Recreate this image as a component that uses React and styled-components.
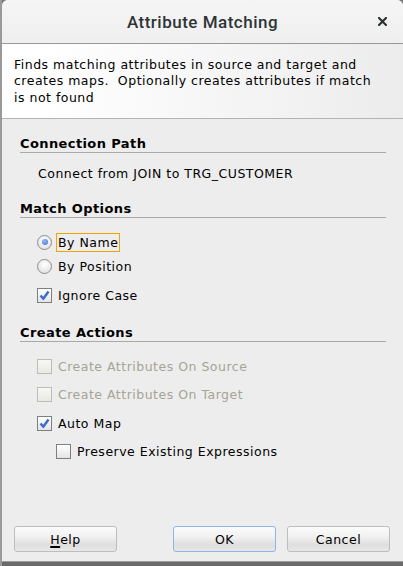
import React from 'react';
import styled, { createGlobalStyle } from 'styled-components';

const GlobalStyle = createGlobalStyle`
  html, body {
    margin: 0;
    padding: 0;
    background: #7b7b7b;
  }
  body {
    font-family: "DejaVu Sans", "Liberation Sans", sans-serif;
    font-size: 12.5px;
    letter-spacing: 0.5px;
    color: #000;
  }
`;

const Screen = styled.div`
  display: flex;
  width: 403px;
  height: 566px;
  overflow: hidden;
  background: linear-gradient(#7b7b7b, #6a6a6a);
`;

const DesktopStrip = styled.div`
  width: 2px;
  flex: none;
  background: #9a9a9a;
`;

const Window = styled.div`
  flex: 1;
  height: 562px;
  display: flex;
  flex-direction: column;
  background: #ededed;
  border-radius: 6px 6px 0 0;
  border-bottom: 1px solid #9b9b9b;
  box-sizing: border-box;
  overflow: hidden;
`;

const TitleBar = styled.div`
  height: 44px;
  flex: none;
  box-sizing: border-box;
  display: flex;
  align-items: center;
  justify-content: center;
  position: relative;
  background: linear-gradient(#f5f5f5, #efefef);
  border-bottom: 1px solid #9a9a9a;
`;

const Title = styled.div`
  font-family: Roboto, "Noto Sans", sans-serif;
  font-weight: 500;
  font-size: 17px;
  letter-spacing: 0.5px;
  color: #2e3436;
  margin-top: 1px;
`;

const CloseButton = styled.div`
  position: absolute;
  right: 16px;
  top: 17px;
  width: 9px;
  height: 9px;
  display: flex;
`;

const Header = styled.div`
  height: 75px;
  flex: none;
  box-sizing: border-box;
  padding: 12.5px 20px 0 12px;
  background: linear-gradient(90deg, #ffffff 10%, #ececec);
  border-bottom: 1px solid #b3b3b3;
  line-height: 16.5px;
  white-space: pre-wrap;
`;

const Body = styled.div`
  flex: 1;
  display: flex;
  flex-direction: column;
  padding: 0 17px 0 18px;
`;

const SectionTitle = styled.div`
  font-weight: bold;
  font-size: 13px;
  letter-spacing: 0.4px;
  line-height: 16px;
  border-bottom: 1px solid #a9a9a9;
  margin-top: ${p => p.$top}px;
`;

const PathText = styled.div`
  line-height: 16px;
  padding-left: 18px;
  margin-top: 13px;
`;

const OptionList = styled.div`
  display: flex;
  flex-direction: column;
  gap: ${p => p.$gap}px;
  margin-top: ${p => p.$top}px;
`;

const Option = styled.div`
  height: 24px;
  display: flex;
  align-items: center;
  padding-left: ${p => (p.$indent ? 36 : 17)}px;
  margin-top: ${p => p.$top || 0}px;
  color: ${p => (p.$disabled ? '#a4a497' : '#000')};
`;

const Box = styled.div`
  width: 15px;
  height: 15px;
  box-sizing: border-box;
  flex: none;
  display: flex;
  align-items: center;
  justify-content: center;
  border: 1px solid ${p => (p.$disabled ? '#bdbdb2' : '#7f7f7f')};
  background: ${p => (p.$disabled ? 'linear-gradient(#f7f7f5, #e9e9e4)' : 'linear-gradient(#ffffff, #e4e4e4)')};
  margin-right: 4px;
`;

const Radio = styled.div`
  width: 15px;
  height: 15px;
  box-sizing: border-box;
  flex: none;
  border-radius: 50%;
  border: 1px solid #8d8d8d;
  background: radial-gradient(circle at 50% 35%, #ffffff, #dcdcdc);
  display: flex;
  align-items: center;
  justify-content: center;
  margin-right: 4px;
`;

const RadioDot = styled.div`
  width: 6px;
  height: 6px;
  border-radius: 50%;
  background: radial-gradient(circle at 40% 35%, #9ab8f0, #3d6fd6);
`;

const Label = styled.span`
  line-height: 17px;
  padding: 0 1px;
  border: 1px solid ${p => (p.$focus ? '#f5a300' : 'transparent')};
`;

const Footer = styled.div`
  display: flex;
  padding: 0 13px 9px 12px;
`;

const Button = styled.div`
  width: 103px;
  height: 26px;
  box-sizing: border-box;
  display: flex;
  align-items: center;
  justify-content: center;
  border-radius: 3px;
  border: 1px solid ${p => (p.$default ? '#8fb5e4' : '#bdbdbd')};
  background: linear-gradient(#fbfbfb, #f1f1f1 40%, #dedede 75%, #e8e8e8);
  margin-right: ${p => p.$right || 0}px;
`;

const Mnemonic = styled.span`
  text-decoration: underline;
  text-decoration-thickness: 2px;
  text-underline-offset: 2px;
`;

const Spacer = styled.div`
  flex: 1;
`;

const CheckMark = () => (
  <svg width="11" height="11" viewBox="0 0 11 11">
    <path d="M1.5 5.5 L4.3 8.8 L9.5 1.5" fill="none" stroke="#3b6ad2" strokeWidth="2.4" strokeLinejoin="round" />
  </svg>
);

const Check = ({ checked, disabled, indent, top, children }) => (
  <Option $disabled={disabled} $indent={indent} $top={top}>
    <Box $disabled={disabled}>{checked && <CheckMark />}</Box>
    <Label>{children}</Label>
  </Option>
);

export default function App() {
  return (
    <>
      <GlobalStyle />
      <Screen>
        <DesktopStrip />
        <Window>
          <TitleBar>
            <Title>Attribute Matching</Title>
            <CloseButton>
              <svg width="9" height="9" viewBox="0 0 9 9">
                <path d="M1 1 L8 8 M8 1 L1 8" stroke="#2e3436" strokeWidth="2.2" strokeLinecap="square" />
              </svg>
            </CloseButton>
          </TitleBar>

          <Header>
            {'Finds matching attributes in source and target and creates maps.  Optionally creates attributes if match is not found'}
          </Header>

          <Body>
            <SectionTitle $top={17}>Connection Path</SectionTitle>
            <PathText>Connect from JOIN to TRG_CUSTOMER</PathText>

            <SectionTitle $top={19}>Match Options</SectionTitle>
            <OptionList $gap={0} $top={12}>
              <Option>
                <Radio><RadioDot /></Radio>
                <Label $focus>By Name</Label>
              </Option>
              <Option>
                <Radio />
                <Label>By Position</Label>
              </Option>
              <Check checked top={5}>Ignore Case</Check>
            </OptionList>

            <SectionTitle $top={18}>Create Actions</SectionTitle>
            <OptionList $gap={4.67} $top={12}>
              <Check disabled>Create Attributes On Source</Check>
              <Check disabled>Create Attributes On Target</Check>
              <Check checked>Auto Map</Check>
              <Check indent>Preserve Existing Expressions</Check>
            </OptionList>
          </Body>

          <Footer>
            <Button><Mnemonic>H</Mnemonic>elp</Button>
            <Spacer />
            <Button $default $right={11}>OK</Button>
            <Button>Cancel</Button>
          </Footer>
        </Window>
      </Screen>
    </>
  );
}
